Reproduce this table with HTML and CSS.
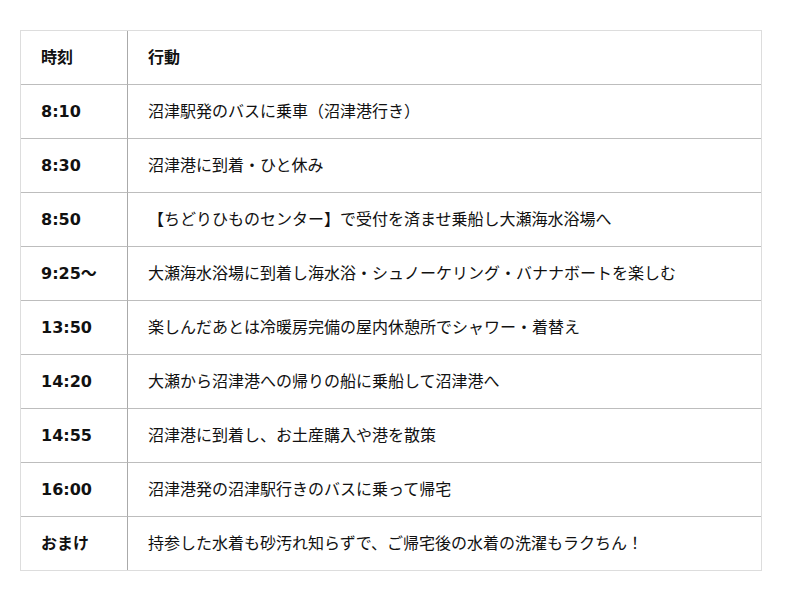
FILE: index.html
```html
<!DOCTYPE html>
<html lang="ja">
<head>
<meta charset="utf-8">
<link rel="stylesheet" href="styles.css">
</head>
<body>
<table class="schedule">
  <tr><th class="time">時刻</th><th class="act">行動</th></tr>
  <tr><td class="time">8:10</td><td class="act">沼津駅発のバスに乗車（沼津港行き）</td></tr>
  <tr><td class="time">8:30</td><td class="act">沼津港に到着・ひと休み</td></tr>
  <tr><td class="time">8:50</td><td class="act">【ちどりひものセンター】で受付を済ませ乗船し大瀬海水浴場へ</td></tr>
  <tr><td class="time">9:25〜</td><td class="act">大瀬海水浴場に到着し海水浴・シュノーケリング・バナナボートを楽しむ</td></tr>
  <tr><td class="time">13:50</td><td class="act">楽しんだあとは冷暖房完備の屋内休憩所でシャワー・着替え</td></tr>
  <tr><td class="time">14:20</td><td class="act">大瀬から沼津港への帰りの船に乗船して沼津港へ</td></tr>
  <tr><td class="time">14:55</td><td class="act">沼津港に到着し、お土産購入や港を散策</td></tr>
  <tr><td class="time">16:00</td><td class="act">沼津港発の沼津駅行きのバスに乗って帰宅</td></tr>
  <tr><td class="time">おまけ</td><td class="act">持参した水着も砂汚れ知らずで、ご帰宅後の水着の洗濯もラクちん！</td></tr>
</table>
</body>
</html>
```
FILE: styles.css
```css
html, body {
  margin: 0;
  padding: 0;
  background: #fff;
}
body {
  padding: 30px 0 0 20px;
  font-family: "DejaVu Sans", "Noto Sans CJK JP", sans-serif;
  font-size: 16px;
  line-height: 20px;
  color: #111;
}
.schedule {
  width: 742px;
  border-collapse: separate;
  border-spacing: 0;
  border: 1px solid #ddd;
}
.schedule th,
.schedule td {
  height: 54px;
  padding: 0 0 0 20px;
  box-sizing: border-box;
  text-align: left;
  vertical-align: middle;
  border-bottom: 1px solid #bdbdbd;
  white-space: nowrap;
}
.schedule tr:last-child td {
  border-bottom: none;
  height: 53px;
}
.schedule th {
  font-weight: bold;
}
.schedule .time {
  width: 107px;
  border-right: 1px solid #aaa;
  font-weight: bold;
}
.schedule .act {
  font-weight: normal;
}
.schedule th.act {
  font-weight: bold;
}
```
